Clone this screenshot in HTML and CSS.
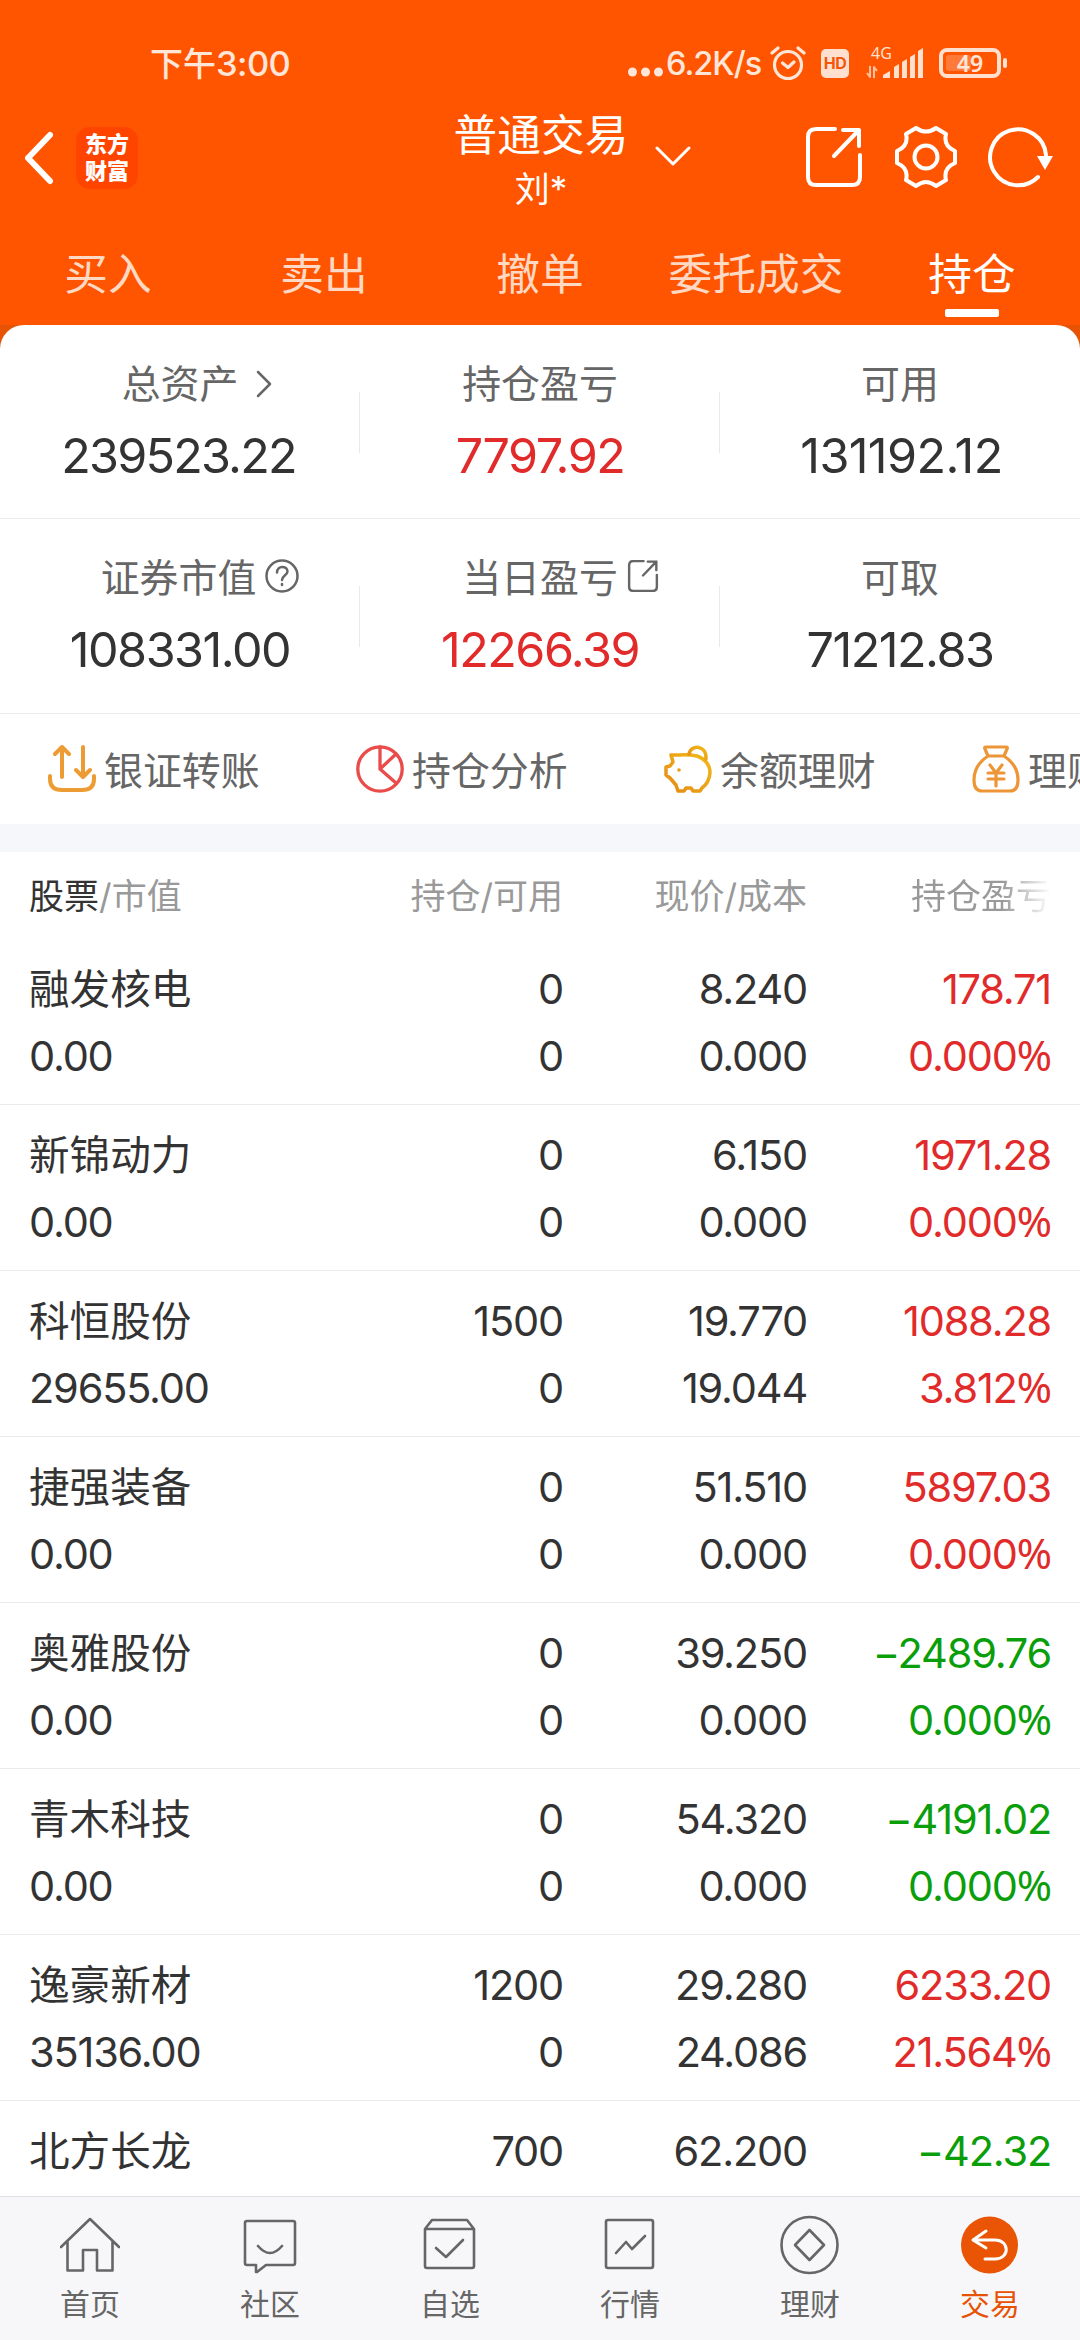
FILE: index.html
```html
<!DOCTYPE html>
<html lang="zh-CN"><head><meta charset="utf-8"><title>持仓</title><link rel="stylesheet" href="styles.css"></head>
<body>
<header class="top">
  <div class="status">
    <span class="time">下午<b>3:00</b></span>
    <div class="status-right">
      <svg class="dots" width="36" height="32" viewBox="0 0 36 32"><circle cx="4.500" cy="24" r="4.500"/><circle cx="17.500" cy="24" r="4.500"/><circle cx="30.500" cy="24" r="4.500"/></svg>
      <span class="speed">6.2K/s</span>
      <svg class="alarm" width="36" height="36" viewBox="0 0 36 36"><circle cx="18" cy="20" r="13.500"/><path d="M2 8 L8 3 M34 8 L28 3 M12.500 18 L18 22.500 L24 17"/></svg>
      <span class="hd">HD</span>
      <svg class="signal" width="58" height="40" viewBox="0 -6 58 40"><text x="5" y="13">4G</text><path d="M17 32V29l7-4v7zM28 32V21l5-3v14zM36 32V16l5-3v19zM44 32V11l5-3v24zM52 32V5l5-3v30z" /><path class="thin" d="M1 27l3 4V20M8 32V21l3 4"/></svg>
      <span class="battery"><i></i><em>49</em></span>
    </div>
  </div>
  <div class="nav">
    <svg class="back" width="30" height="54" viewBox="0 0 30 54"><path d="M26 4 L4 27 L26 50"/></svg>
    <span class="logo"><b>东方</b><b>财富</b></span>
    <div class="title"><div class="title-main">普通交易</div><div class="title-sub">刘*</div></div>
    <svg class="down" width="36" height="20" viewBox="0 0 36 20"><path d="M2 2 L18 18 L34 2"/></svg>
    <svg class="nav-icon share" width="56" height="60" viewBox="0 0 56 60"><path d="M29 2H10Q2 2 2 10V50Q2 58 10 58H46Q54 58 54 50V28M37 3H53V19M53 3L28 29"/></svg>
    <svg class="nav-icon gear" width="62" height="62" viewBox="0 0 62 62"><path d="M21 2Q31 9 41 2L51 8Q48 20 60 25V37Q48 42 51 54L41 60Q31 52 21 60L11 54Q14 42 2 37V25Q14 20 11 8Z"/><circle cx="31" cy="31" r="11.500"/></svg>
    <svg class="nav-icon refresh" width="66" height="62" viewBox="0 0 66 62"><path d="M50 50A28 28 0 1 1 58 28"/><path class="solid" d="M49 29H65L57 43Z"/></svg>
  </div>
  <nav class="tabs"><span>买入</span><span>卖出</span><span>撤单</span><span>委托成交</span><span class="on">持仓</span></nav>
</header>
<main>
  <section class="summary">
    <div class="sum-row">
      <div class="cell"><div class="label shift">总资产<svg class="more" width="16" height="28" viewBox="0 0 16 28"><path d="M2 2L14 14L2 26"/></svg></div><div class="num tight">239523.22</div></div>
      <div class="cell"><div class="label">持仓盈亏</div><div class="num red">7797.92</div></div>
      <div class="cell"><div class="label">可用</div><div class="num loose">131192.12</div></div>
    </div>
    <div class="sum-row">
      <div class="cell"><div class="label shift wide">证券市值<svg class="help" width="34" height="34" viewBox="0 0 34 34"><circle cx="17" cy="17" r="15.500"/><path d="M12 13.500C12 6 22.500 6.500 22.500 12.500C22.500 16 17 16.500 17 21M17 25V26"/></svg></div><div class="num">108331.00</div></div>
      <div class="cell"><div class="label">当日盈亏<svg class="out" width="32" height="32" viewBox="0 0 56 60"><path d="M29 2H10Q2 2 2 10V50Q2 58 10 58H46Q54 58 54 50V28M37 3H53V19M53 3L28 29"/></svg></div><div class="num red">12266.39</div></div>
      <div class="cell"><div class="label">可取</div><div class="num">71212.83</div></div>
    </div>
  </section>
  <section class="actions">
    <div class="action"><svg width="48" height="48" viewBox="0 0 48 48" stroke="#ed9c33" stroke-width="4"><path d="M2 31V34Q2 45 14 45H34Q46 45 46 34V31M14 32V3M7 9L14 2L21 9M35 2V31M28 25L35 32L42 25"/></svg><span>银证转账</span></div>
    <div class="action"><svg width="48" height="48" viewBox="0 0 48 48" stroke="#ea4b4b" stroke-width="3.300"><circle cx="24" cy="24" r="22.200"/><path d="M24 2V24L40 38M24 24L40 9"/></svg><span>持仓分析</span></div>
    <div class="action"><svg width="48" height="48" viewBox="0 0 48 48" stroke="url(#gold)" stroke-width="3.500"><defs><linearGradient id="gold" x1="0" y1="1" x2="1" y2="0"><stop offset="0" stop-color="#e58a16"/><stop offset="1" stop-color="#f2ba16"/></linearGradient></defs><path d="M9 17L7 10L15 10Q24 9 33 11Q46 16 46 28Q45 38 38 43L36 46H29L27 43H22L20 46H14L12 40L6 33L2 30V22L6 21Z"/><path d="M25 9C27-1 43 0 42 14"/><circle cx="15" cy="25" r="1.800" fill="#ea9c18" stroke="none"/></svg><span>余额理财</span></div>
    <div class="action"><svg width="48" height="48" viewBox="0 0 48 48" stroke="#ed9637" stroke-width="3.200"><path d="M14 2H34Q36 2 35 4L32 11H16L13 4Q12 2 14 2ZM16 11Q2 20 2 35Q2 46 10 46H38Q46 46 46 35Q46 20 32 11M18 20L24 28L30 20M16 28H32M16 34H32M24 28V41"/></svg><span>理财</span></div>
  </section>
  <section class="holdings">
    <div class="head"><span><b>股票</b>/市值</span><span>持仓/可用</span><span>现价/成本</span><span class="fade">持仓盈亏</span></div>
    <div class="stock"><span class="name">融发核电</span><span>0</span><span>8.240</span><span class="red">178.71</span><span>0.00</span><span>0</span><span>0.000</span><span class="red">0.000<b>%</b></span></div>
    <div class="stock"><span class="name">新锦动力</span><span>0</span><span>6.150</span><span class="red">1971.28</span><span>0.00</span><span>0</span><span>0.000</span><span class="red">0.000<b>%</b></span></div>
    <div class="stock"><span class="name">科恒股份</span><span>1500</span><span>19.770</span><span class="red">1088.28</span><span>29655.00</span><span>0</span><span>19.044</span><span class="red">3.812<b>%</b></span></div>
    <div class="stock"><span class="name">捷强装备</span><span>0</span><span>51.510</span><span class="red">5897.03</span><span>0.00</span><span>0</span><span>0.000</span><span class="red">0.000<b>%</b></span></div>
    <div class="stock"><span class="name">奥雅股份</span><span>0</span><span>39.250</span><span class="green">−2489.76</span><span>0.00</span><span>0</span><span>0.000</span><span class="green">0.000<b>%</b></span></div>
    <div class="stock"><span class="name">青木科技</span><span>0</span><span>54.320</span><span class="green">−4191.02</span><span>0.00</span><span>0</span><span>0.000</span><span class="green">0.000<b>%</b></span></div>
    <div class="stock"><span class="name">逸豪新材</span><span>1200</span><span>29.280</span><span class="red">6233.20</span><span>35136.00</span><span>0</span><span>24.086</span><span class="red">21.564<b>%</b></span></div>
    <div class="stock"><span class="name">北方长龙</span><span>700</span><span>62.200</span><span class="green">−42.32</span></div>
  </section>
</main>
<footer class="bar">
  <div class="item"><svg width="60" height="60" viewBox="0 0 60 60"><path d="M1 32L30 4L59 32M7.500 27V55.500H23V35H37V55.500H52.500V27"/></svg>首页</div>
  <div class="item"><svg width="60" height="60" viewBox="0 0 60 60"><path d="M7 6H53Q55 6 55 8V48Q55 50 53 50H26L17 57H16V50H7Q5 50 5 48V8Q5 6 7 6ZM18 31Q30 45 42 31"/></svg>社区</div>
  <div class="item"><svg width="60" height="60" viewBox="0 0 60 60"><path d="M5 14L12 5H47L54 14V51Q54 53 52 53H7Q5 53 5 51ZM5 14H54M16 33L26 42L43 25"/></svg>自选</div>
  <div class="item"><svg width="60" height="60" viewBox="0 0 60 60"><path d="M8 5H51Q53 5 53 7V51Q53 53 51 53H8Q6 53 6 51V7Q6 5 8 5ZM16 38L26 27L32 34L45 21"/></svg>行情</div>
  <div class="item"><svg width="60" height="60" viewBox="0 0 60 60"><circle cx="29.500" cy="30" r="28"/><path d="M29.500 15L44 30L29.500 45L15 30Z"/></svg>理财</div>
  <div class="item active"><svg width="60" height="60" viewBox="0 0 60 60"><circle class="disc" cx="29.500" cy="30" r="28.500"/><path d="M26 16L13 25L26 33M13 25H35C50 25 50 44 35 44H25"/></svg>交易</div>
</footer>
</body></html>
```
FILE: styles.css
```css
* { box-sizing: border-box; }
body { margin: 0; width: 1080px; height: 2340px; overflow: hidden; display: flex; flex-direction: column; background: #fff; color: #333; font-family: Inter, "Noto Sans CJK SC", sans-serif; }
svg { display: block; flex: none; fill: none; stroke-linecap: round; stroke-linejoin: round; }
b, em, i { font-weight: inherit; font-style: normal; }

.top { height: 349px; flex: none; background: linear-gradient(#ff5500 325px, #e65305 325px); color: #fff; }
.status { height: 100px; padding: 46px 73px 0 150px; display: flex; justify-content: space-between; align-items: flex-start; color: #ffe6d9; }
.time { margin-top: -2px; font-size: 33px; line-height: 36px; font-weight: 500; font-family: "Noto Sans CJK SC", sans-serif; }
.time b { font-family: Inter, sans-serif; font-size: 34.500px; letter-spacing: -.6px; }
.status-right { display: flex; align-items: flex-start; }
.dots { fill: #ffe6d9; margin: 2px 2px 0 0; }
.speed { width: 98px; font-size: 32.500px; line-height: 36px; font-weight: 500; letter-spacing: -1px; }
.alarm { margin: -1px 15px 0 6px; stroke: #ffe6d9; stroke-width: 3.200; }
.hd { width: 28px; height: 29px; margin-top: 3px; background: #ffe0cf; color: #f5560a; border-radius: 5px; font-size: 16px; line-height: 29px; font-weight: 700; text-align: center; letter-spacing: -.5px; }
.signal { margin: -6px 0 0 17px; fill: #ffe0cf; }
.signal text { font: 16px "Noto Sans", sans-serif; }
.signal .thin { fill: none; stroke: #ffc0a0; stroke-width: 2; stroke-linecap: butt; }
.battery { position: relative; width: 62px; height: 30px; margin: 2px 6px 0 15px; border: 4px solid #ffe0cf; border-radius: 8px; text-align: center; font: 600 23px/22px "Noto Sans", sans-serif; }
.battery::after { content: ""; position: absolute; right: -10px; top: 6px; width: 4px; height: 10px; border-radius: 2px; background: #ffe0cf; }
.battery i { position: absolute; left: 3px; top: 3px; width: 25px; height: 16px; background: #ff7a38; border-radius: 3px; }
.battery em { position: relative; }

.nav { height: 118px; padding-left: 24px; display: flex; align-items: flex-start; }
.back { margin-top: 31px; stroke: #fff; stroke-width: 6; }
.logo { width: 62px; height: 62px; margin: 27px 0 0 22px; padding-top: 2px; display: flex; flex-direction: column; border-radius: 14px; background: #ff4400; text-align: center; font: 900 22px/27px "Noto Sans CJK SC", sans-serif; }
.title { width: 180px; margin: 11px 0 0 313px; text-align: center; font-size: 43.700px; line-height: 50px; white-space: nowrap; }
.title-sub { font-size: 35px; line-height: 56px; }
.down { margin: 46px 0 0 24px; stroke: #fff; stroke-width: 3; }
.nav-icon { stroke: #fff; stroke-width: 4; }
.share { margin: 27px 0 0 115px; }
.gear { margin: 26px 0 0 33px; }
.refresh { margin: 27px 0 0 31px; }
.refresh .solid { fill: #fff; stroke: none; }
.tabs { display: flex; }
.tabs span { flex: 1; height: 107px; padding-top: 28px; display: flex; flex-direction: column; align-items: center; font-size: 43.700px; line-height: 58px; color: #ffd9c4; }
.tabs .on { color: #fff; }
.on::after { content: ""; width: 54px; height: 8px; margin-top: 5px; border-radius: 2px; background: #fff; }

main { position: relative; margin-top: -24px; flex: 1; min-height: 0; overflow: hidden; background: #fff; border-radius: 24px 24px 0 0; }
.sum-row { height: 194px; display: flex; border-bottom: 1px solid #ebebeb; }
.sum-row + .sum-row { height: 195px; }
.cell { flex: 1; position: relative; padding-top: 34px; display: flex; flex-direction: column; align-items: center; }
.cell + .cell::before { content: ""; position: absolute; left: -1px; top: 67px; width: 1px; height: 61px; background: #e9e9e9; }
.label { position: relative; font-size: 38.900px; line-height: 50px; color: #666; }
.label.shift { padding-left: 34px; }
.label.wide { padding-left: 40px; }
.label svg { display: inline-block; stroke: #666; stroke-width: 2.500; }
.more { margin: 0 0 0 18px; }
.help { margin: 0 0 -1px 9px; }
.label .out { position: absolute; left: 165px; top: 7px; stroke-width: 4.500; }
.num { font-size: 48.500px; line-height: 60px; margin-top: 17px; letter-spacing: -1.500px; }
.tight { padding-right: 3px; letter-spacing: -1.800px; }
.loose { padding-left: 3px; letter-spacing: -.600px; }
.red { color: #e12b2b; }
.green { color: #0a9e0a; }

.actions { height: 110px; padding-left: 48px; display: flex; white-space: nowrap; overflow: hidden; }
.action { flex: 0 0 308px; display: flex; gap: 8px; align-items: center; font-size: 38.900px; color: #666; }
.action span { padding-bottom: 3px; }

.holdings { border-top: 28px solid #f6f7fa; }
.head, .stock { display: grid; grid-template-columns: 284px 250px 244px 244px; padding: 0 29px; }
.head { height: 87px; font-size: 35px; line-height: 88px; color: #999; }
.head b { color: #333; }
.head span:not(:first-child), .stock span:not(:nth-child(4n+1)) { text-align: right; }
.fade { background: linear-gradient(90deg, #999 80%, #fff 100%); background-clip: text; -webkit-background-clip: text; color: transparent; }
.stock { height: 166px; padding-top: 17px; align-content: start; border-bottom: 1px solid #ebebeb; font-size: 41.500px; line-height: 67px; letter-spacing: -1.200px; }
.stock .name { font-size: 40.600px; letter-spacing: 0; }
.stock b { font-family: "Noto Sans", sans-serif; font-size: 42.500px; line-height: 1; letter-spacing: -1px; }

.bar { height: 144px; flex: none; display: flex; background: #f7f7f9; border-top: 1px solid #e0e0e2; position: relative; }
.item { flex: 1; padding-top: 18px; display: flex; flex-direction: column; align-items: center; font-size: 29.900px; line-height: 40px; color: #666; }
.item svg { stroke: #666; stroke-width: 2.600; margin-bottom: 9px; }
.item.active { color: #e65305; }
.active svg { stroke: #fff; stroke-width: 3; }
.disc { fill: #e95504; stroke: none; }
```
